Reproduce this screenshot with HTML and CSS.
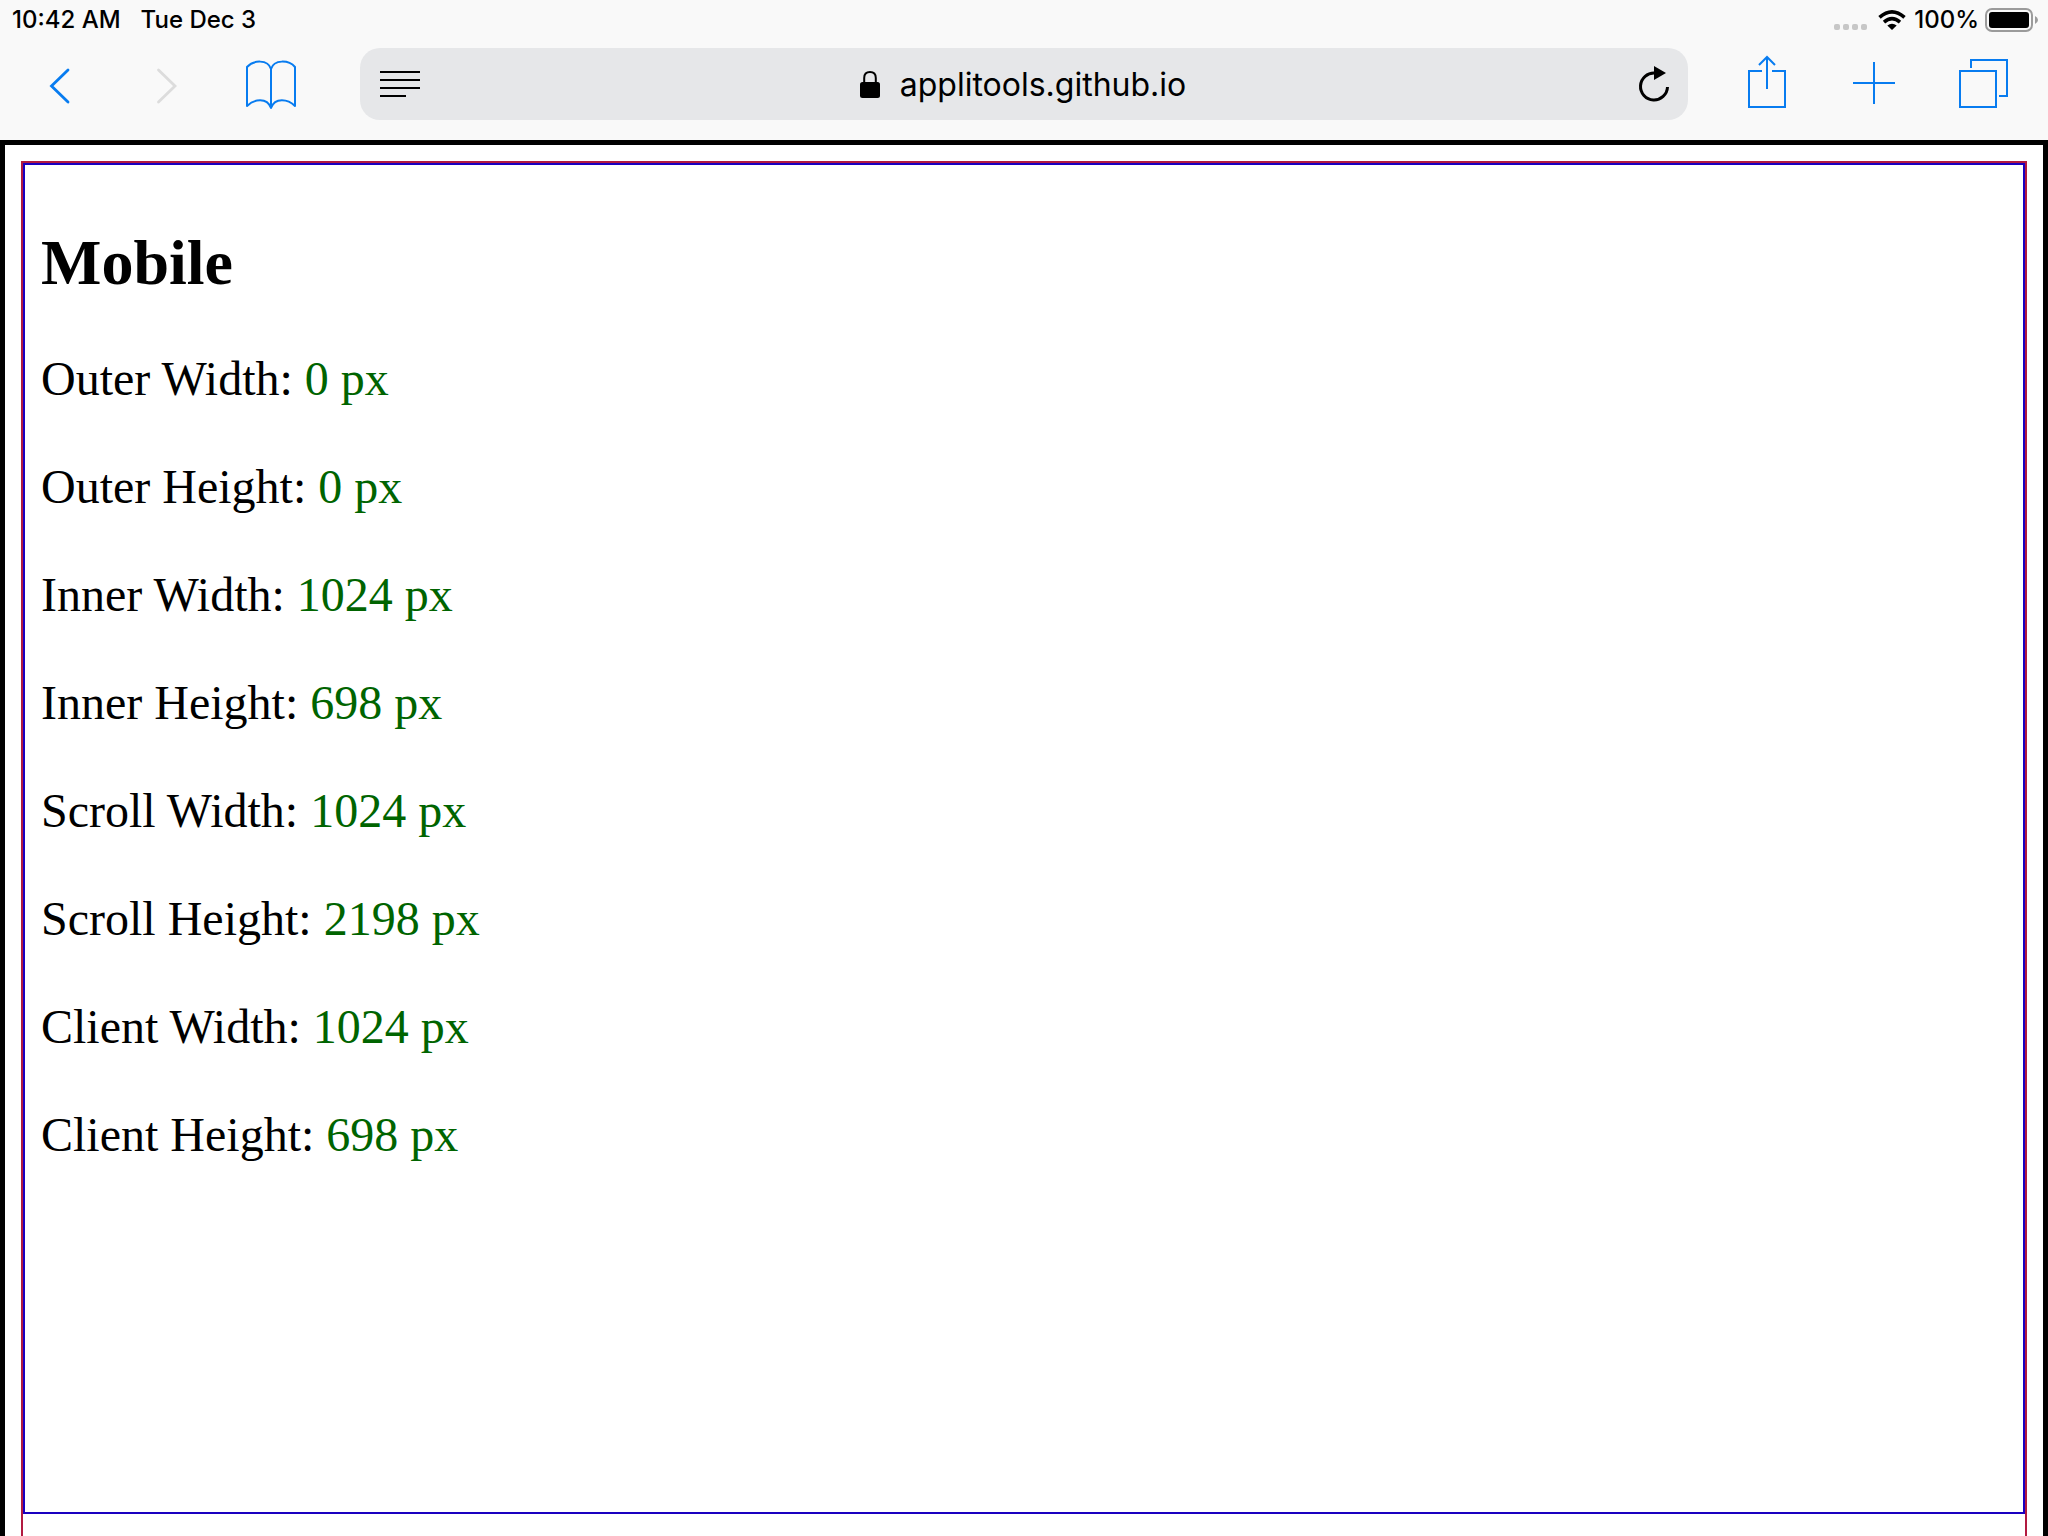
FILE: index.html
```html
<!DOCTYPE html>
<html lang="en">
<head>
<meta charset="utf-8">
<meta name="viewport" content="width=device-width, initial-scale=1">
<title>Mobile</title>
<link rel="stylesheet" href="styles.css">
</head>
<body>
<header class="chrome">
  <div class="status">
    <div class="status-group status-time"><span>10:42 AM</span><span>Tue Dec 3</span></div>
    <div class="status-group status-info">
      <svg class="dots" width="34" height="40" viewBox="0 0 34 40" aria-hidden="true"><g fill="#c7c7c7"><rect x="0" y="24" width="6" height="6" rx="2"/><rect x="9" y="24" width="6" height="6" rx="2"/><rect x="18" y="24" width="6" height="6" rx="2"/><rect x="27" y="24" width="6" height="6" rx="2"/></g></svg>
      <svg class="wifi" width="28" height="40" viewBox="0 0 28 40" aria-hidden="true"><g fill="none" stroke="#000" stroke-width="3.6"><path d="M1.5 17.3Q14 6.3 26.5 17.3"/><path d="M6 22.1Q14 15.3 22 22.1"/></g><path d="M9.3 25.5Q14 21.8 18.7 25.5L14 30Z"/></svg>
      <span>100%</span>
      <svg class="battery" width="54" height="40" viewBox="0 0 54 40" aria-hidden="true"><rect x="1" y="9" width="46" height="22" rx="6" fill="none" stroke="#9b9b9b" stroke-width="2"/><rect x="4" y="12" width="40" height="16" rx="3"/><path d="M50 16Q53 17.5 53 20T50 24Z" fill="#9b9b9b"/></svg>
    </div>
  </div>
  <nav class="toolbar" aria-label="Browser">
    <div class="tools tools-left">
      <button class="tool" type="button" aria-label="Back"><svg width="56" height="72" viewBox="0 0 56 72"><path stroke-width="2.8" stroke-linecap="round" d="M36 22L19.500 38L36 54"/></svg></button>
      <button class="tool" type="button" aria-label="Forward" disabled><svg width="56" height="72" viewBox="0 0 56 72"><path stroke-width="2.8" stroke-linecap="round" d="M20.500 22L37 38L20.500 54"/></svg></button>
      <button class="tool" type="button" aria-label="Bookmarks"><svg width="56" height="72" viewBox="0 0 56 72"><path stroke-linejoin="round" d="M27 21C24 11 9 12 3 19V58C10 51 23 49 27 60V21C30 11 45 12 51 19V58C44 51 31 49 27 60"/></svg></button>
    </div>
    <div class="address">
      <button class="address-button" type="button" aria-label="Reader view"><svg width="40" height="72" viewBox="0 0 40 72"><path d="M0 24H40M0 32H40M0 40H40M0 48H26" stroke="#000" stroke-width="2"/></svg></button>
      <a class="url" href="#page"><svg width="20" height="28" viewBox="0 0 20 28" aria-hidden="true"><path d="M4.2 12V7Q4.2 1 10 1T15.8 7V12" fill="none" stroke="#000" stroke-width="2"/><rect y="11" width="20" height="16" rx="2.5"/></svg><span>applitools.github.io</span></a>
      <button class="address-button" type="button" aria-label="Reload"><svg width="32" height="72" viewBox="0 0 32 72"><path d="M17 25A13.5 13.5 0 1 0 29.5 39" fill="none" stroke="#000" stroke-width="3"/><path d="M16 18L28 25L16 32Z"/></svg></button>
    </div>
    <div class="tools tools-right">
      <button class="tool" type="button" aria-label="Share"><svg width="56" height="72" viewBox="0 0 56 72"><path d="M23 23H10V59H46V23H33M28 41V9M20 17L28 9L36 17"/></svg></button>
      <button class="tool" type="button" aria-label="New tab"><svg width="56" height="72" viewBox="0 0 56 72"><path d="M27 14V56M6 35H48"/></svg></button>
      <button class="tool" type="button" aria-label="Show tabs"><svg width="56" height="72" viewBox="0 0 56 72"><path d="M5 23H41V59H5ZM16 20V12H52V48H44"/></svg></button>
    </div>
  </nav>
</header>
<main class="page" id="page">
  <div class="outer">
    <div class="inner">
      <h1>Mobile</h1>
      <p>Outer Width: <span class="value">0 px</span></p>
      <p>Outer Height: <span class="value">0 px</span></p>
      <p>Inner Width: <span class="value">1024 px</span></p>
      <p>Inner Height: <span class="value">698 px</span></p>
      <p>Scroll Width: <span class="value">1024 px</span></p>
      <p>Scroll Height: <span class="value">2198 px</span></p>
      <p>Client Width: <span class="value">1024 px</span></p>
      <p>Client Height: <span class="value">698 px</span></p>
    </div>
  </div>
</main>
</body>
</html>
```
FILE: styles.css
```css
* {
  box-sizing: border-box;
}

body {
  display: flex;
  flex-direction: column;
  height: 100vh;
  margin: 0;
  overflow: hidden;
  background: #fff;
  color: #000;
  font-family: "Liberation Serif", "Times New Roman", serif;
}

svg {
  display: block;
  flex: none;
}

button {
  padding: 0;
  border: 0;
  background: none;
}

/* Browser bars */
.chrome {
  flex: none;
  background: #f9f9f9;
  font-family: Inter, "Liberation Sans", sans-serif;
}

.status {
  display: flex;
  justify-content: space-between;
  height: 40px;
  padding: 0 9px 0 12px;
  font-size: 24px;
  font-weight: 500;
  line-height: 40px;
}

.status-group {
  display: flex;
}

.status-time {
  gap: 20px;
}

.wifi {
  margin: 0 8px 0 10px;
}

.battery {
  margin-left: 6px;
}

.toolbar {
  display: flex;
  padding: 8px 11px 20px 7px;
}

.tools {
  display: flex;
  flex: none;
}

.tools-left {
  margin-right: 35px;
}

.tools-right {
  margin-left: 25px;
}

.tool {
  display: flex;
  justify-content: center;
  width: 106px;
  color: #087cf0;
}

.tools-right .tool {
  width: 108px;
}

.tool:disabled {
  color: #dcdcdc;
}

.tool svg {
  fill: none;
  stroke: currentColor;
  stroke-width: 2;
}

.address {
  display: flex;
  flex: 1;
  justify-content: space-between;
  height: 72px;
  padding: 0 18px 0 20px;
  border-radius: 20px;
  background: #e6e7e9;
}

.url {
  display: flex;
  align-items: center;
  gap: 20px;
  margin-right: 12px;
  padding-top: 2px;
  color: #000;
  font-size: 32px;
  line-height: 40px;
  text-decoration: none;
}

/* Page content */
.page {
  flex: 1;
  min-height: 0;
  padding: 16px 16px 0;
  overflow: hidden;
  border: 5px solid #000;
  border-bottom: 0;
}

.outer {
  min-height: 200vh;
  border: 2px solid #b21a40;
}

.inner {
  min-height: calc(100vh - 185px);
  padding: 16px;
  border: 2px solid #1a00c0;
}

h1 {
  margin: 46px 0 50px;
  font-size: 64px;
  line-height: 72px;
}

p {
  margin: 0 0 48px;
  font-size: 48px;
  line-height: 60px;
}

.value {
  color: #006400;
}
```
